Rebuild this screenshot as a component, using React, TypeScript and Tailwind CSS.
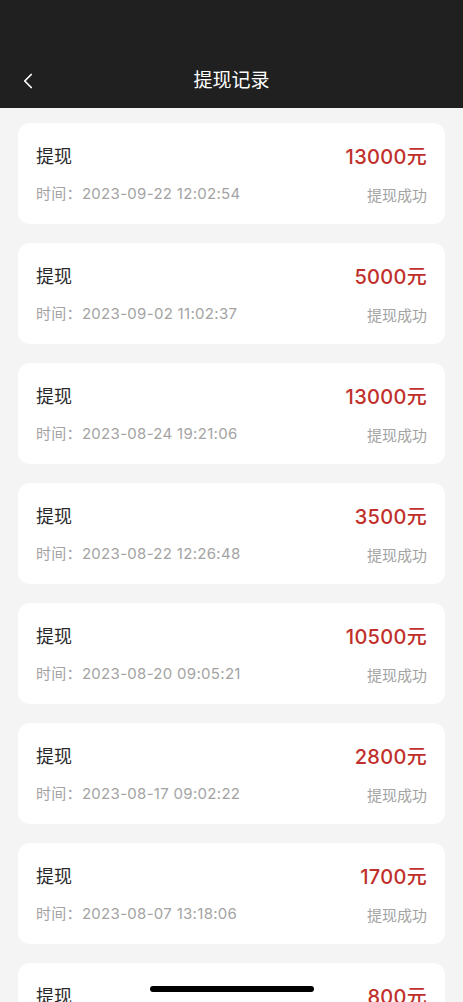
import { ChevronLeft } from 'lucide-react';

// Withdrawal records
const records = [
  { amount: 13000, time: '2023-09-22 12:02:54' },
  { amount: 5000, time: '2023-09-02 11:02:37' },
  { amount: 13000, time: '2023-08-24 19:21:06' },
  { amount: 3500, time: '2023-08-22 12:26:48' },
  { amount: 10500, time: '2023-08-20 09:05:21' },
  { amount: 2800, time: '2023-08-17 09:02:22' },
  { amount: 1700, time: '2023-08-07 13:18:06' },
  { amount: 800, time: '2023-08-01 10:12:45' },
];

const font = { fontFamily: 'Inter, "Noto Sans CJK SC", sans-serif' };

const App = () => {
  return (
    <div className="relative h-[1002px] w-[463px] overflow-hidden bg-[#f4f4f4]" style={font}>
      <div className="flex h-[108px] flex-col justify-end bg-[#202020]">
        <div className="relative flex h-[54px] items-center justify-center">
          <ChevronLeft className="absolute left-[15px] top-[14px] h-[26px] w-[26px] text-white" strokeWidth={1.6} />
          <span className="text-[19px] text-white">提现记录</span>
        </div>
      </div>

      <div className="flex flex-col gap-[19px] px-[18px] pt-[15px]">
        {records.map((r, i) => (
          <div key={i} className="flex h-[101px] shrink-0 justify-between rounded-[12px] bg-white px-[18px]">
            <div className="flex flex-col">
              <span className="mt-[22px] text-[18px] leading-[24px] text-[#2a2a2a]">提现</span>
              <span className="mt-[15px] text-[15px] leading-[20px] tracking-[0.3px] text-[#a3a3a3]">时间：{r.time}</span>
            </div>
            <div className="flex flex-col items-end">
              <span className="mt-[21px] text-[20px] font-medium leading-[26px] tracking-[0.3px] text-[#c0302b]">{r.amount}元</span>
              <span className="mt-[16px] text-[15px] leading-[20px] text-[#a3a3a3]">提现成功</span>
            </div>
          </div>
        ))}
      </div>

      <div className="absolute bottom-[10px] left-[150px] h-[6px] w-[164px] rounded-full bg-black" />
    </div>
  );
};

export default App;
